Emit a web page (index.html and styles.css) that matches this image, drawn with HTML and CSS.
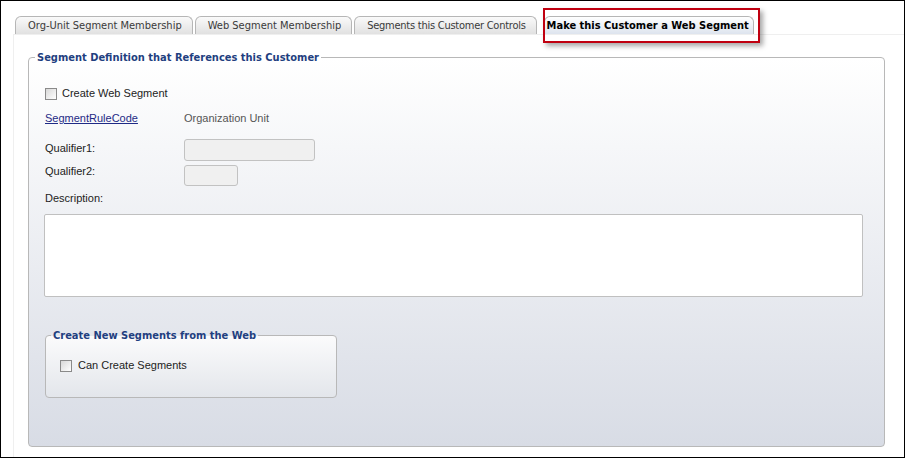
FILE: index.html
```html
<!DOCTYPE html>
<html lang="en">
<head>
  <meta charset="UTF-8">
  <title>Make this Customer a Web Segment</title>
  <link rel="stylesheet" href="styles.css">
</head>
<body>
<div class="frame">

  <div class="tabs">
    <div class="tab">Org-Unit Segment Membership</div>
    <div class="tab">Web Segment Membership</div>
    <div class="tab tight">Segments this Customer Controls</div>
    <div class="tab active">Make this Customer a Web Segment</div>
  </div>

  <!-- callout drawn over the active tab -->
  <div class="callout"></div>

  <div class="tab-body">
    <fieldset class="panel">
      <legend>Segment Definition that References this Customer</legend>

      <label class="row check-row">
        <input type="checkbox" class="check">
        <span>Create Web Segment</span>
      </label>

      <div class="row link-row">
        <a href="#" class="label">SegmentRuleCode</a>
        <span class="value">Organization Unit</span>
      </div>

      <div class="row q1">
        <span class="label">Qualifier1:</span>
        <input type="text" class="field wide">
      </div>

      <div class="row q2">
        <span class="label">Qualifier2:</span>
        <input type="text" class="field narrow">
      </div>

      <div class="row desc-label">Description:</div>
      <textarea class="desc"></textarea>

      <fieldset class="sub">
        <legend>Create New Segments from the Web</legend>
        <label class="row check-row">
          <input type="checkbox" class="check">
          <span>Can Create Segments</span>
        </label>
      </fieldset>
    </fieldset>
  </div>

</div>
</body>
</html>
```

FILE: styles.css
```css
* {
  box-sizing: border-box;
}
body {
  margin: 0;
  background: #fff;
  font-family: "Liberation Sans", Arial, sans-serif;
  font-size: 11px;
  color: #222;
}
.frame {
  position: relative;
  width: 905px;
  height: 458px;
  border: 1px solid #000;
  display: flex;
  flex-direction: column;
}

/* tabs */
.tabs {
  display: flex;
  gap: 2px;
  padding: 15px 0 0 14px;
  height: 33px;
}
.tab {
  height: 18px;
  padding: 0 10px 0 12px;
  border: 1px solid #b6b6b6;
  border-bottom: none;
  border-radius: 6px 6px 0 0;
  background: linear-gradient(#fafafa, #e1e1e1);
  font-family: "DejaVu Sans Condensed", "DejaVu Sans", sans-serif;
  font-stretch: condensed;
  font-size: 11px;
  line-height: 17px;
  color: #3a3a3a;
  white-space: nowrap;
}
.tab.tight {
  letter-spacing: -0.25px;
}
.tab.active {
  margin-left: 5px;
  padding: 0 4px 0 2px;
  background: linear-gradient(#ffffff, #dde4ee);
  font-weight: bold;
  color: #000;
}
.callout {
  position: absolute;
  left: 542px;
  top: 7px;
  width: 217px;
  height: 35px;
  border: 2px solid #c00010;
  box-shadow: 3px 3px 5px rgba(0, 0, 0, 0.35);
}

.tab-body {
  flex: 1;
  margin-left: 12px;
  border-top: 1px solid #efefef;
  border-left: 1px solid #efefef;
  display: flex;
  flex-direction: column;
  padding: 16px 19px 10px 14px;
}

/* fieldsets */
fieldset {
  margin: 0;
  border: 1px solid #b8b8b8;
  border-radius: 4px;
  min-width: 0;
}
legend {
  padding: 0 2px;
  font-family: "DejaVu Sans Condensed", "DejaVu Sans", sans-serif;
  font-stretch: condensed;
  font-weight: bold;
  font-size: 11px;
  line-height: 13px;
  color: #1f3f80;
}
.panel {
  flex: 1;
  padding: 23px 21px 0 16px;
  background: linear-gradient(#ffffff, #d8dce5);
}
.panel > legend {
  margin-left: -10px;
}

.row {
  display: flex;
  align-items: center;
  line-height: 13px;
}
.check-row {
  gap: 5px;
  height: 13px;
}
.check {
  appearance: none;
  margin: 0;
  width: 12px;
  height: 12px;
  border: 1px solid #8a8a8a;
  background: linear-gradient(135deg, #d8d8d8, #ffffff);
}
.label {
  width: 139px;
  flex-shrink: 0;
}
a.label {
  color: #1f2a86;
}
.value {
  color: #555;
}
.link-row {
  margin-top: 12px;
}
.q1 {
  margin-top: 14px;
  align-items: flex-start;
}
.q1 .label {
  padding-top: 3px;
}
.q2 {
  margin-top: 4px;
  align-items: flex-start;
}
.field {
  height: 22px;
  margin: 0;
  border: 1px solid #c2c2c2;
  border-radius: 3px;
  background: #f0f0f0;
}
.wide {
  width: 131px;
}
.narrow {
  width: 54px;
  height: 21px;
}
.desc-label {
  margin-top: 6px;
}
.desc {
  display: block;
  margin: 9px 0 0 -1px;
  height: 83px;
  width: calc(100% + 1px);
  resize: none;
  border: 1px solid #c0c0c0;
  border-radius: 2px;
  background: #fff;
}

.sub {
  width: 292px;
  height: 69px;
  margin-top: 32px;
  padding: 17px 0 0 14px;
  background: linear-gradient(#fbfbfc, #e3e6eb);
}
.sub .check-row {
  gap: 6px;
}
.sub legend {
  margin-left: -9px;
}
```
